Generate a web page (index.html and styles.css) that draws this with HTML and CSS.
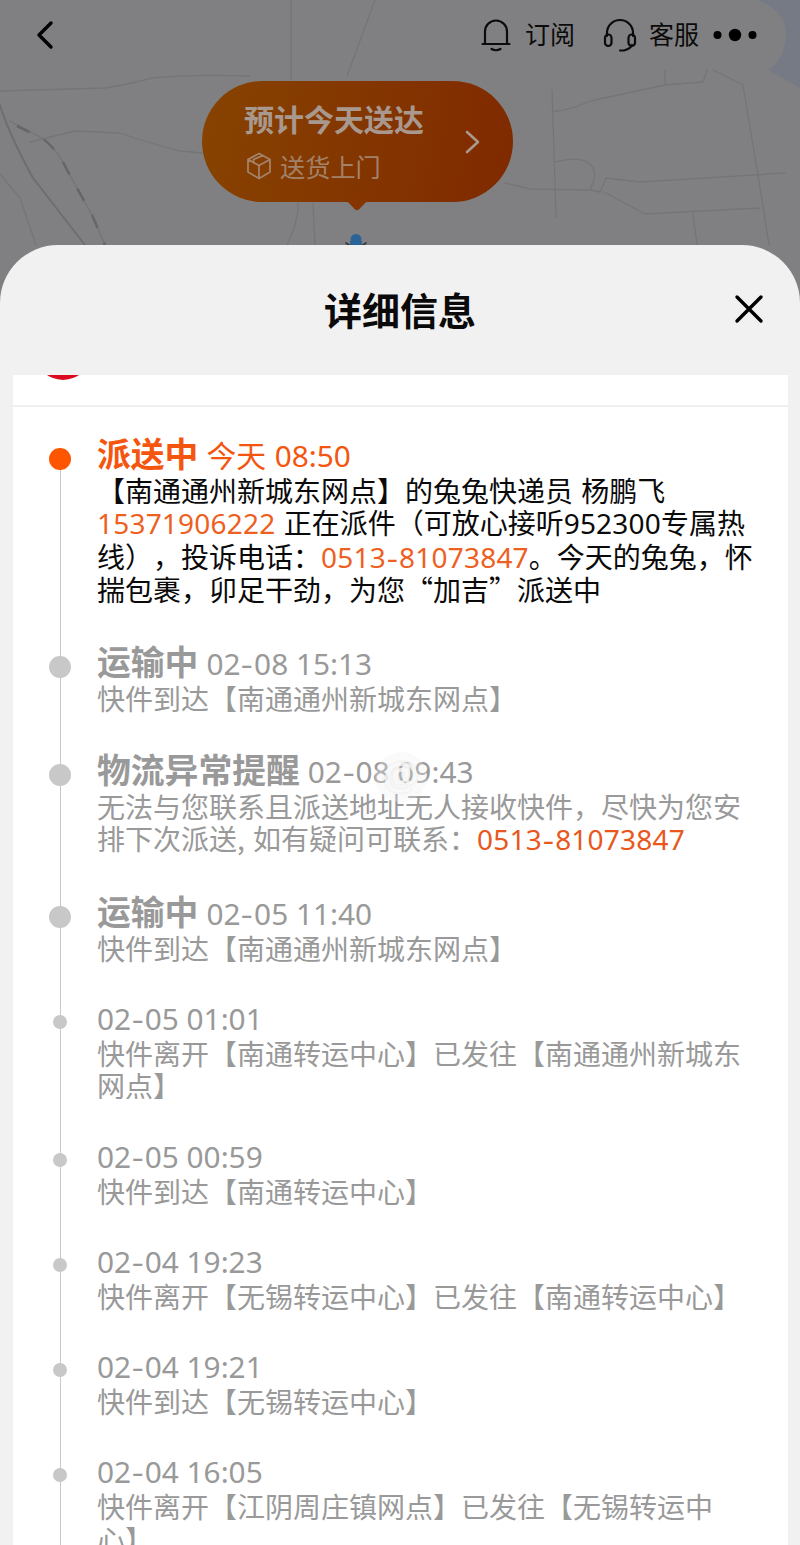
FILE: index.html
```html
<!DOCTYPE html>
<html lang="zh-CN">
<head>
    <meta charset="UTF-8">
    <meta name="viewport" content="width=device-width, initial-scale=1.0">
    <title>详细信息</title>
    <link rel="stylesheet" href="styles.css">
</head>
<body>
    <div class="map">
        <svg class="map-lines" viewBox="0 0 800 310" width="800" height="310">
            <path class="water" d="M758 0H800V88L768 70Q785 60 786 34Q786 12 758 0Z"/>
            <path d="M0 91L105 88Q130 84 152 78Q190 74 250 76M291 0V80M375 0L347 76M30 142L75 131L120 133Q155 145 180 151L202 153M0 174L20 198L36 245M298 203Q299 220 287 245M313 203L315 245"/>
            <path d="M552 90L556 217M552 112Q570 110 590 101L665 85L703 82L707 70M665 70V85M713 70L743 85L758 175L769 245M505 183L530 189L590 190Q600 170 588 163Q580 156 556 162M590 190L600 192L606 178L640 182L785 173M604 192L645 214L760 208M693 214L697 245"/>
            <path class="road" d="M0 105Q8 132 33 178L85 245"/>
            <path class="side" d="M10 121L42 138Q58 150 67 170L92 215L105 245"/>
            <path class="rail" d="M17 126L42 138Q58 150 67 170L92 215L105 245"/>
        </svg>
        <div class="topbar">
            <svg class="back" width="20" height="30" viewBox="0 0 20 30"><path d="M15 3L3 15L15 27"/></svg>
            <div class="actions">
                <svg class="icon" width="30" height="34" viewBox="0 0 30 34"><path d="M4 26V13.500a11 11 0 0 1 22 0V26M1.500 26H28.500M10.500 31Q15 33.500 19.500 31"/></svg>
                <span class="action-name">订阅</span>
                <svg class="icon headset" width="34" height="34" viewBox="0 0 34 34"><path d="M4 18V15a13 13 0 0 1 26 0V18M17 32.500H21Q27 31 29 27"/><rect x="2" y="16.500" width="6.500" height="11.500" rx="3.200"/><rect x="25.500" y="16.500" width="6.500" height="11.500" rx="3.200"/></svg>
                <span class="action-name">客服</span>
                <svg class="more" width="44" height="14" viewBox="0 0 44 14"><circle cx="4.500" cy="7" r="4"/><circle cx="22" cy="7" r="6.200"/><circle cx="39.500" cy="7" r="4"/></svg>
            </div>
        </div>
        <div class="eta">
            <div>
                <div class="eta-title">预计今天送达</div>
                <div class="eta-sub">
                    <svg width="26" height="28" viewBox="0 0 26 28"><path d="M13 1.500L24 7.500V20L13 26.500L2 20V7.500ZM2 7.500L13 13.500L24 7.500M13 13.500V26.500M7.500 10.500V7.500L17 3.500"/></svg>
                    送货上门
                </div>
            </div>
            <svg class="eta-arrow" width="16" height="24" viewBox="0 0 16 24"><path d="M2 2L13 12L2 22"/></svg>
        </div>
        <svg class="pin" width="24" height="20" viewBox="0 0 24 20"><path class="pin-arm" d="M2 10L5 12M22 10L19 12"/><circle cx="12" cy="6.500" r="5.500"/><rect x="6" y="8" width="12" height="12"/></svg>
    </div>

    <div class="sheet">
        <div class="sheet-head">
            <h1>详细信息</h1>
            <svg class="close" width="30" height="30" viewBox="0 0 30 30"><path d="M3 3L27 27M27 3L3 27"/></svg>
        </div>
        <div class="card">
            <div class="company"><span class="logo"></span></div>
            <ul class="timeline">
                <li class="item major current">
                    <div class="head"><b>派送中</b><span class="time">今天 <span class="num">08:50</span></span></div>
                    <p>【南通通州新城东网点】的兔兔快递员 杨鹏飞<br><span class="num tel">15371906222</span> 正在派件（可放心接听<span class="num">952300</span>专属热<br>线），投诉电话：<span class="num tel">0513<i>-</i>81073847</span>。今天的兔兔，怀<br>揣包裹，卯足干劲，为您“加吉”派送中</p>
                </li>
                <li class="item major">
                    <div class="head"><b>运输中</b><span class="time num">02<i>-</i>08 15:13</span></div>
                    <p>快件到达【南通通州新城东网点】</p>
                </li>
                <li class="item major">
                    <div class="head"><b>物流异常提醒</b><span class="time num">02<i>-</i>08 09:43</span></div>
                    <p>无法与您联系且派送地址无人接收快件，尽快为您安<br>排下次派送, 如有疑问可联系：<span class="num tel">0513<i>-</i>81073847</span></p>
                </li>
                <li class="item major">
                    <div class="head"><b>运输中</b><span class="time num">02<i>-</i>05 11:40</span></div>
                    <p>快件到达【南通通州新城东网点】</p>
                </li>
                <li class="item">
                    <div class="head"><span class="time num">02<i>-</i>05 01:01</span></div>
                    <p>快件离开【南通转运中心】已发往【南通通州新城东<br>网点】</p>
                </li>
                <li class="item">
                    <div class="head"><span class="time num">02<i>-</i>05 00:59</span></div>
                    <p>快件到达【南通转运中心】</p>
                </li>
                <li class="item">
                    <div class="head"><span class="time num">02<i>-</i>04 19:23</span></div>
                    <p>快件离开【无锡转运中心】已发往【南通转运中心】</p>
                </li>
                <li class="item">
                    <div class="head"><span class="time num">02<i>-</i>04 19:21</span></div>
                    <p>快件到达【无锡转运中心】</p>
                </li>
                <li class="item">
                    <div class="head"><span class="time num">02<i>-</i>04 16:05</span></div>
                    <p>快件离开【江阴周庄镇网点】已发往【无锡转运中<br>心】</p>
                </li>
            </ul>
        </div>
    </div>
    <div class="watermark">@</div>
</body>
</html>
```

FILE: styles.css
```css
* {
    box-sizing: border-box;
}
body {
    margin: 0;
    width: 800px;
    height: 1545px;
    overflow: hidden;
    position: relative;
    background-color: #808082;
    font-family: "Noto Sans CJK SC", sans-serif;
    text-spacing-trim: space-all;
}
svg {
    display: block;
    flex: none;
    fill: none;
    stroke-linecap: round;
    stroke-linejoin: round;
}

/* map */
.map {
    height: 245px;
    position: relative;
}
.map-lines {
    position: absolute;
    top: 0;
    left: 0;
    stroke: #757577;
    stroke-width: 1.3;
}
.map-lines .water {
    fill: #757a84;
    stroke: none;
}
.map-lines .road {
    stroke: #6e6e70;
    stroke-width: 2;
}
.map-lines .side {
    stroke: #747476;
}
.map-lines .rail {
    stroke: #666668;
    stroke-width: 2.5;
    stroke-dasharray: 14 16;
    stroke-linecap: butt;
}
.topbar {
    position: relative;
    height: 69px;
    padding: 0 43px 0 36px;
    display: flex;
    align-items: center;
    justify-content: space-between;
}
.back {
    stroke: #000;
    stroke-width: 3.4;
}
.actions {
    display: flex;
    align-items: center;
}
.icon {
    stroke: #0b0b0b;
    stroke-width: 2.2;
}
.headset {
    margin-left: 28px;
}
.action-name {
    margin: -3px 0 0 14px;
    font-size: 25px;
    line-height: 34px;
    color: #0b0b0b;
}
.headset + .action-name {
    margin-left: 12px;
}
.more {
    margin-left: 14px;
    fill: #000;
}
.eta {
    position: relative;
    width: 311px;
    height: 121px;
    margin: 12px 0 0 202px;
    padding: 15px 32px 0 42px;
    display: flex;
    justify-content: space-between;
    border-radius: 61px;
    background: linear-gradient(100deg, #874300, #802900);
    color: #a8988d;
}
.eta::after {
    content: "";
    position: absolute;
    left: 147px;
    top: 111px;
    width: 16px;
    height: 16px;
    border-radius: 3px;
    background-color: #843500;
    transform: rotate(45deg);
}
.eta-title {
    font-size: 30px;
    line-height: 44px;
    font-weight: bold;
}
.eta-sub {
    display: flex;
    align-items: center;
    gap: 8px;
    margin: 4px 0 0 2px;
    font-size: 25.2px;
    line-height: 44px;
    color: #a38269;
}
.eta-sub svg {
    stroke: #a38269;
    stroke-width: 1.8;
}
.eta-arrow {
    margin-top: 34px;
    stroke: #a8988d;
    stroke-width: 2.6;
}
.pin {
    position: absolute;
    left: 344px;
    top: 233px;
    fill: #2a6496;
}
.pin-arm {
    stroke: #333;
    stroke-width: 1.6;
}

/* sheet */
.sheet {
    position: relative;
    height: 1300px;
    overflow: hidden;
    padding: 0 12.5px;
    border-radius: 58px 58px 0 0;
    background-color: #f1f1f1;
}
.sheet-head {
    position: relative;
    height: 130px;
    padding-bottom: 3px;
    display: flex;
    align-items: center;
    justify-content: center;
}
h1 {
    margin: 0;
    font-size: 38px;
    line-height: 56px;
    color: #0a0a0a;
}
.close {
    position: absolute;
    right: 23.5px;
    top: 49px;
    stroke: #000;
    stroke-width: 3.4;
}
.card {
    background-color: #fff;
}
.company {
    height: 32px;
    overflow: hidden;
    border-bottom: 2px solid #efefef;
}
.logo {
    display: block;
    width: 56px;
    height: 56px;
    margin: -51px 0 0 22.5px;
    border-radius: 50%;
    background-color: #dc0a1e;
}

/* timeline */
.timeline {
    list-style: none;
    margin: 0;
    padding: 28.5px 0 0 84.5px;
}
.item {
    position: relative;
    padding-bottom: 37.5px;
    color: #999;
}
.item::before {
    content: "";
    position: absolute;
    left: -37px;
    top: 20px;
    width: 1.4px;
    height: 100%;
    background-color: #c8c8c8;
}
.item::after {
    content: "";
    position: absolute;
    left: -44px;
    top: 13px;
    width: 14px;
    height: 14px;
    border-radius: 50%;
    background-color: #c8c8c8;
}
.major::after {
    left: -48px;
    top: 12px;
    width: 22px;
    height: 22px;
}
.current::after {
    background-color: #fe5500;
}
.head {
    height: 35px;
    line-height: 33px;
    display: flex;
    align-items: baseline;
    white-space: nowrap;
}
.major .head {
    height: 38px;
    line-height: 34px;
}
.head b {
    font-size: 33.8px;
    margin-right: 8px;
}
.time {
    font-size: 29.8px;
}
.current .time {
    word-spacing: 2px;
}
.num {
    font-family: "Noto Sans", sans-serif;
}
.num i {
    font-style: normal;
    display: inline-block;
    transform: scaleX(1.25);
    margin: 0 2px;
}
.item p {
    margin: 0;
    font-size: 28px;
    line-height: 32.65px;
    word-spacing: 2px;
    white-space: nowrap;
}
p .num {
    letter-spacing: 0.2px;
}
.tel {
    color: #e8571c;
}
.current .head {
    color: #f4560f;
}
.current p {
    color: #0a0a0a;
}
.current .tel {
    color: #ee5f22;
}
.watermark {
    position: absolute;
    left: 375px;
    top: 752px;
    width: 52px;
    height: 50px;
    border-radius: 50%;
    background-color: rgba(240, 240, 240, 0.3);
    color: rgba(255, 255, 255, 0.75);
    font: bold 40px/46px "Noto Sans", sans-serif;
    text-align: center;
    text-shadow: 0 0 3px rgba(0, 0, 0, 0.1);
}
```
